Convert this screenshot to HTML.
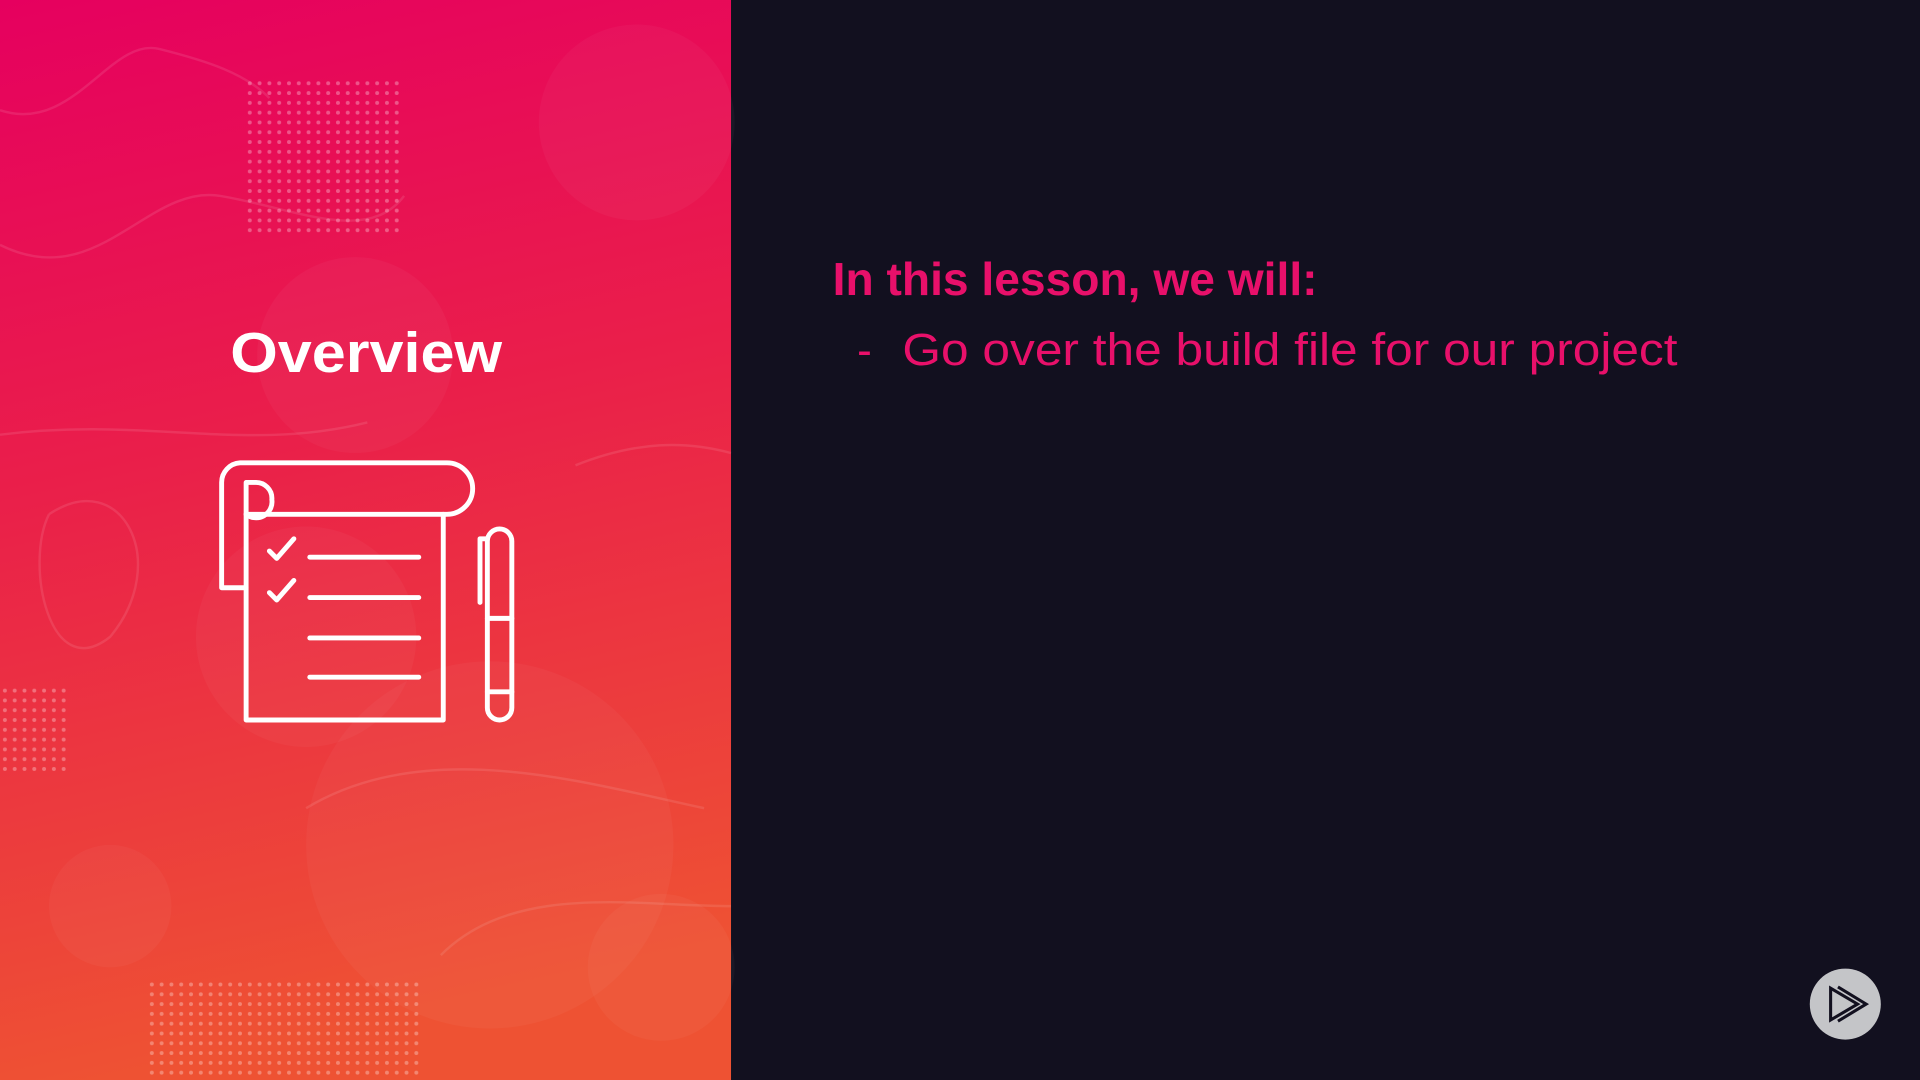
<!DOCTYPE html>
<html><head><meta charset="utf-8"><style>
html,body{margin:0;padding:0;width:1920px;height:1080px;overflow:hidden;background:#12101f}
svg{display:block}
</style></head><body>
<svg width="1920" height="1080" viewBox="0 0 1568 882" preserveAspectRatio="none" xmlns="http://www.w3.org/2000/svg">
<defs>
<linearGradient id="g" x1="0" y1="0" x2="0.15" y2="1">
<stop offset="0" stop-color="#e6005f"/>
<stop offset="0.45" stop-color="#ea1f4a"/>
<stop offset="1" stop-color="#ee5233"/>
</linearGradient>
<pattern id="dots" width="8" height="8" patternUnits="userSpaceOnUse"><circle cx="4" cy="4" r="1.6" fill="#fff" fill-opacity="0.3"/></pattern>
</defs>
<rect width="1568" height="882" fill="#12101f"/>
<rect width="597" height="882" fill="url(#g)"/>
<g fill="#fff" fill-opacity="0.035">
<circle cx="520" cy="100" r="80"/><circle cx="290" cy="290" r="80"/><circle cx="250" cy="520" r="90"/>
<circle cx="400" cy="690" r="150"/><circle cx="90" cy="740" r="50"/><circle cx="540" cy="790" r="60"/>
</g>
<rect x="198" y="65" width="128" height="125" fill="url(#dots)"/>
<rect x="120" y="800" width="225" height="82" fill="url(#dots)"/>
<rect x="0" y="560" width="55" height="70" fill="url(#dots)"/>
<g fill="none" stroke="#fff" stroke-opacity="0.1" stroke-width="2">
<path d="M0 90 C60 110 90 30 130 40 S200 60 220 80"/>
<path d="M0 200 C80 240 120 150 180 160 S300 200 330 160"/>
<path d="M0 355 C120 340 200 370 300 345"/>
<path d="M40 420 C100 380 140 460 90 520 C40 560 20 460 40 420"/>
<path d="M470 380 C520 360 560 360 597 370"/>
<path d="M250 660 C350 600 480 640 575 660"/>
<path d="M360 780 C420 720 520 740 597 740"/>
</g>
<g fill="none" stroke="#fff" stroke-width="4" stroke-linecap="round" stroke-linejoin="round">
<path d="M201 420 V588 H362 V420"/>
<path d="M201 420 H365 A18 18 0 0 0 365 378 H196 A16 16 0 0 0 181 394 V480 H201"/>
<path d="M201 420 A13 13 0 0 0 222 408 A13 13 0 0 0 208 394 H201 V420"/>
<path d="M220 450 L226 456 L240 440"/><path d="M220 484 L226 490 L240 474"/>
<path d="M253 455 H342"/><path d="M253 488 H342"/><path d="M253 521 H342"/><path d="M253 553 H342"/>
<path d="M398 462 V442 A9 9 0 0 1 418 442 V578 A9 9 0 0 1 398 578 Z"/>
<path d="M398 440 H392 V492"/>
<path d="M398 505 H418"/><path d="M398 565 H418"/>
</g>
<text x="188" y="304" textLength="222" lengthAdjust="spacingAndGlyphs" font-family="Liberation Sans, sans-serif" font-weight="bold" font-size="46" fill="#fff">Overview</text>
<text x="680" y="241" textLength="396" lengthAdjust="spacingAndGlyphs" font-family="Liberation Sans, sans-serif" font-weight="bold" font-size="38" fill="#e8106a">In this lesson, we will:</text>
<text x="700" y="298" font-family="Liberation Sans, sans-serif" font-size="36" fill="#e8106a">-</text>
<text x="737" y="298" textLength="633" lengthAdjust="spacingAndGlyphs" font-family="Liberation Sans, sans-serif" font-size="37" fill="#e8106a">Go over the build file for our project</text>
<circle cx="1507" cy="820" r="29" fill="#c4c5c8"/>
<g fill="none" stroke="#12101f" stroke-width="2.5" stroke-linejoin="miter">
<path d="M1495 807 V833 L1517 820 Z"/>
<path d="M1501 806 L1524 820 L1501 834"/>
</g>
</svg>
</body></html>
